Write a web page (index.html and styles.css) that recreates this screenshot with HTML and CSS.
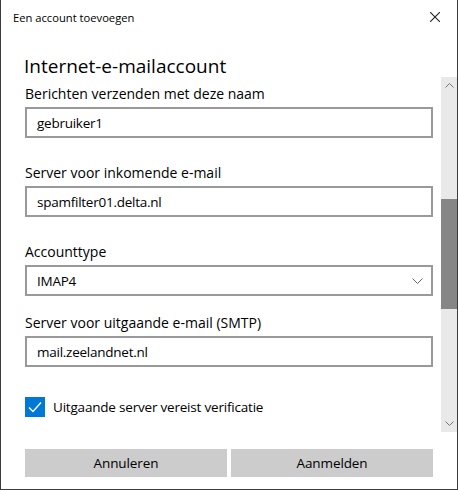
FILE: index.html
```html
<!DOCTYPE html>
<html lang="nl">
<head>
  <meta charset="UTF-8">
  <title>Een account toevoegen</title>
  <link rel="stylesheet" href="styles.css">
</head>
<body>
  <div class="dialog">
    <!-- Title bar -->
    <div class="titlebar">
      <span class="title">Een account toevoegen</span>
      <svg class="close" width="10" height="10" viewBox="0 0 10 10">
        <path d="M0 0L10 10M10 0L0 10" stroke="#222" stroke-width="1.1" fill="none"/>
      </svg>
    </div>

    <h1 class="heading">Internet-e-mailaccount</h1>

    <!-- Scrollable form area -->
    <div class="main">
      <div class="form">
        <div class="field">
          <div class="label">Berichten verzenden met deze naam</div>
          <div class="input">gebruiker1</div>
        </div>
        <div class="field">
          <div class="label">Server voor inkomende e-mail</div>
          <div class="input">spamfilter01.delta.nl</div>
        </div>
        <div class="field field-select">
          <div class="label">Accounttype</div>
          <div class="input select">
            <span>IMAP4</span>
            <svg width="11" height="6" viewBox="0 0 11 6">
              <path d="M0.5 0.5L5.5 5.5L10.5 0.5" stroke="#666" stroke-width="1" fill="none"/>
            </svg>
          </div>
        </div>
        <div class="field">
          <div class="label">Server voor uitgaande e-mail (SMTP)</div>
          <div class="input">mail.zeelandnet.nl</div>
        </div>
        <div class="check-row">
          <span class="checkbox">
            <svg width="20" height="20" viewBox="0 0 20 20">
              <path d="M4 10.5L8 14.5L16 5.5" stroke="#fff" stroke-width="1.4" fill="none"/>
            </svg>
          </span>
          <span class="check-label">Uitgaande server vereist verificatie</span>
        </div>
      </div>

      <div class="scrollbar">
        <div class="arrow">
          <svg width="9" height="5" viewBox="0 0 9 5"><path d="M0.5 4.5L4.5 0.5L8.5 4.5" stroke="#777" fill="none"/></svg>
        </div>
        <div class="track">
          <div class="thumb"></div>
        </div>
        <div class="arrow">
          <svg width="9" height="5" viewBox="0 0 9 5"><path d="M0.5 0.5L4.5 4.5L8.5 0.5" stroke="#777" fill="none"/></svg>
        </div>
      </div>
    </div>

    <!-- Buttons -->
    <div class="footer">
      <button class="btn">Annuleren</button>
      <button class="btn">Aanmelden</button>
    </div>
  </div>
</body>
</html>
```

FILE: styles.css
```css
body {
  margin: 0;
  background-color: #fff;
  font-family: "Open Sans", "Noto Sans", sans-serif;
  color: #000;
}
.dialog {
  width: 458px;
  height: 490px;
  box-sizing: border-box;
  border: 1px solid #3c3c3c;
  border-top: none;
  display: flex;
  flex-direction: column;
  background-color: #fff;
}
.titlebar {
  height: 34px;
  display: flex;
  align-items: center;
  justify-content: space-between;
  padding: 0 17px 0 12px;
}
.title {
  font-size: 11.2px;
}
.heading {
  height: 43px;
  box-sizing: border-box;
  margin: 0;
  padding: 19px 0 0 23px;
  font-size: 19px;
  font-weight: normal;
  line-height: 26px;
}
.main {
  height: 355px;
  display: flex;
}
.form {
  flex: 1;
  padding: 7px 8px 0 24px;
}
.field {
  margin-bottom: 25px;
}
.field-select {
  margin-bottom: 17px;
}
.label {
  font-size: 14px;
  line-height: 20px;
  margin-bottom: 3px;
}
.input {
  height: 31px;
  box-sizing: border-box;
  border: 2px solid #999;
  padding: 0 9px 0 10px;
  font-size: 13.5px;
  letter-spacing: -0.25px;
  display: flex;
  align-items: center;
}
.select {
  justify-content: space-between;
  padding-right: 8px;
}
.check-row {
  display: flex;
  align-items: center;
  margin-top: 30px;
}
.checkbox {
  width: 20px;
  height: 20px;
  background-color: #0078d7;
  display: flex;
}
.check-label {
  font-size: 13.5px;
  letter-spacing: -0.2px;
  margin-left: 8px;
}
.scrollbar {
  width: 16px;
  background-color: #e9e9e9;
  display: flex;
  flex-direction: column;
}
.arrow {
  height: 17px;
  display: flex;
  align-items: center;
  justify-content: center;
}
.track {
  flex: 1;
  padding-top: 105px;
}
.thumb {
  height: 110px;
  background-color: #868686;
}
.footer {
  flex: 1;
  display: flex;
  gap: 4px;
  padding: 17px 24px 0 24px;
}
.btn {
  flex: 1;
  height: 28px;
  border: none;
  background-color: #cccccc;
  font-family: "Open Sans", "Noto Sans", sans-serif;
  font-size: 13.5px;
  letter-spacing: -0.1px;
  color: #000;
  padding: 0;
}
```
